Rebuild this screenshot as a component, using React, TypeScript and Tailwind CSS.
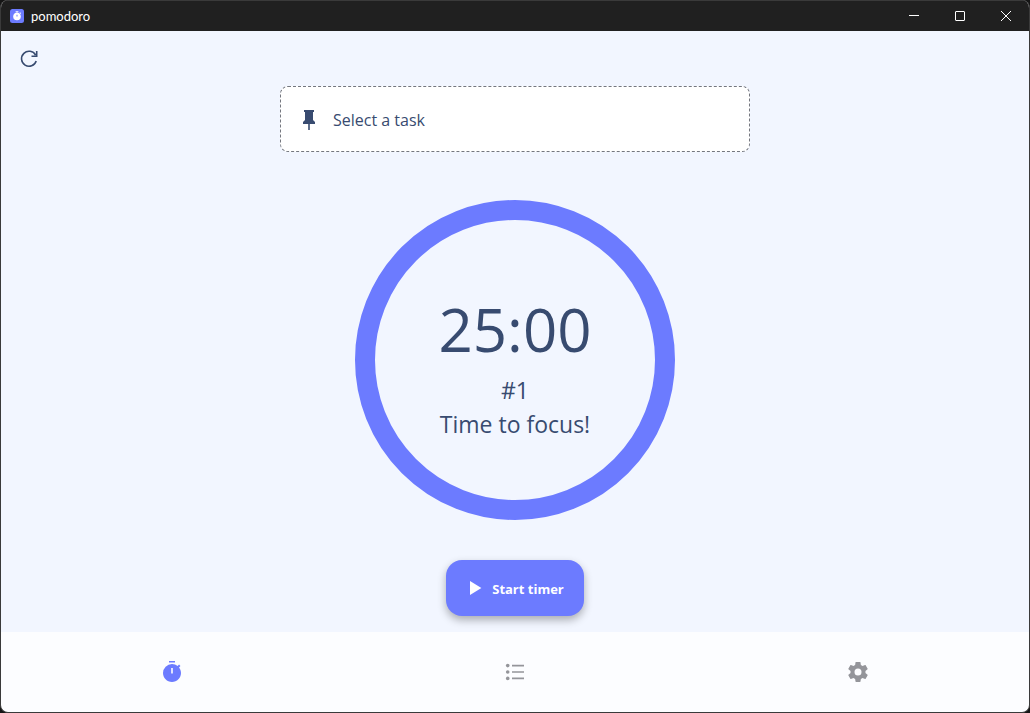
import type { ReactNode } from "react";

const COG =
  "M12,15.5A3.5,3.5 0 0,1 8.5,12A3.5,3.5 0 0,1 12,8.5A3.5,3.5 0 0,1 15.5,12A3.5,3.5 0 0,1 12,15.5M19.43,12.97C19.47,12.65 19.5,12.33 19.5,12C19.5,11.67 19.47,11.34 19.43,11L21.54,9.37C21.73,9.22 21.78,8.95 21.66,8.73L19.66,5.27C19.54,5.05 19.27,4.96 19.05,5.05L16.56,6.05C16.04,5.66 15.5,5.32 14.87,5.07L14.5,2.42C14.46,2.18 14.25,2 14,2H10C9.75,2 9.54,2.18 9.5,2.42L9.13,5.07C8.5,5.32 7.96,5.66 7.44,6.05L4.95,5.05C4.73,4.96 4.46,5.05 4.34,5.27L2.34,8.73C2.21,8.95 2.27,9.22 2.46,9.37L4.57,11C4.53,11.34 4.5,11.67 4.5,12C4.5,12.33 4.53,12.65 4.57,12.97L2.46,14.63C2.27,14.78 2.21,15.05 2.34,15.27L4.34,18.73C4.46,18.95 4.73,19.03 4.95,18.95L7.44,17.94C7.96,18.34 8.5,18.68 9.13,18.93L9.5,21.58C9.54,21.82 9.75,22 10,22H14C14.25,22 14.46,21.82 14.5,21.58L14.87,18.93C15.5,18.67 16.04,18.34 16.56,17.94L19.05,18.95C19.27,19.03 19.54,18.95 19.66,18.73L21.66,15.27C21.78,15.05 21.73,14.78 21.54,14.63L19.43,12.97Z";
const TIMER =
  "M19.03 7.39L20.45 5.97C20 5.46 19.55 5 19.04 4.56L17.62 6C16.07 4.74 14.12 4 12 4A9 9 0 0 0 3 13C3 17.97 7 22 12 22S21 17.97 21 13C21 10.88 20.26 8.93 19.03 7.39M12.8 13.6H11.2V8H12.8V13.6M15 1H9V2.4H15V1Z";
const PIN = "M16,12V4H17V2H7V4H8V12L6,14V16H11.2V22H12.8V16H18V14L16,12Z";

function Icon({ children }: { children: ReactNode }) {
  return (
    <svg viewBox="0 0 24 24" className="size-6 shrink-0" fill="currentColor" aria-hidden="true">
      {children}
    </svg>
  );
}

function TitleBar() {
  return (
    <header className="flex h-[31px] shrink-0 items-center justify-between border-t border-[#3a3a3a] bg-[#202020] text-white">
      <div className="flex items-center gap-[7px] pl-[9px]">
        <svg viewBox="0 0 14 14" className="size-[14px]" aria-hidden="true">
          <rect width="14" height="14" rx="2.5" fill="#6c7bff" />
          <circle cx="7" cy="7.5" r="3.8" fill="#fff" />
          <path d="M5.6 2.2h2.8v1.4H5.6zM9.4 3.8l.7-.6 1 1-.7.7z" fill="#fff" />
          <path d="M6.5 5.8h1v1.8h-1z" fill="#6c7bff" />
        </svg>
        <h1 className="font-['Lato','Open_Sans',sans-serif] text-[13px] leading-4">pomodoro</h1>
      </div>
      <div className="flex h-full">
        <button aria-label="Minimize" className="grid w-[46px] place-items-center">
          <svg viewBox="0 0 10 10" className="size-[10px]" stroke="currentColor" aria-hidden="true">
            <path d="M0 4.5h10" />
          </svg>
        </button>
        <button aria-label="Maximize" className="grid w-[46px] place-items-center">
          <svg viewBox="0 0 10 10" className="size-[10px]" fill="none" stroke="currentColor" aria-hidden="true">
            <rect x=".5" y=".5" width="9" height="9" rx=".5" />
          </svg>
        </button>
        <button aria-label="Close" className="grid w-[46px] place-items-center">
          <svg viewBox="0 0 10 10" className="size-[10px]" stroke="currentColor" aria-hidden="true">
            <path d="M0 0l10 10M10 0L0 10" />
          </svg>
        </button>
      </div>
    </header>
  );
}

function NavItem({ label, active, children }: { label: string; active?: boolean; children: ReactNode }) {
  return (
    <button
      aria-label={label}
      className={`grid flex-1 place-items-center ${active ? "text-[#6c7bff]" : "text-[#94959a]"}`}
    >
      <Icon>{children}</Icon>
    </button>
  );
}

export default function App() {
  return (
    <div className="min-h-screen bg-[#151515] font-['Open_Sans','Noto_Sans',sans-serif]">
      <div className="flex min-h-screen flex-col overflow-hidden rounded-lg border-x border-b border-[#3a3a3a] bg-[#fcfdff] text-[#384b70]">
        <TitleBar />
        <main className="flex flex-1 flex-col bg-[#f2f6ff] pb-3">
          <div className="flex h-[55px] items-center px-4">
            <button aria-label="Reset">
              <Icon>
                <path
                  d="M18.6 8.1A7.5 7.5 0 1 0 19.2 14M19.7 4v5.2h-5.2"
                  fill="none"
                  stroke="currentColor"
                  strokeWidth="1.6"
                />
              </Icon>
            </button>
          </div>
          <div className="flex flex-1 flex-col items-center px-4">
            <button className="flex h-[66px] w-full max-w-[470px] items-center gap-3 rounded-lg border border-dashed border-[#74777f] bg-white px-4 pt-px">
              <Icon>
                <path d={PIN} />
              </Icon>
              <span className="text-base">Select a task</span>
            </button>
            <section className="mt-12 flex size-80 flex-col items-center justify-center rounded-full border-20 border-[#6c7bff] pt-1.5">
              <p className="text-[60px] leading-[88px]">25:00</p>
              <p className="text-[23px] leading-[34px]">#1</p>
              <p className="text-[23px] leading-[34px]">Time to focus!</p>
            </section>
            <button className="mt-10 flex h-14 items-center gap-1.5 rounded-2xl bg-[#6c7bff] px-5 text-white shadow-[0_4px_8px_rgba(0,0,0,0.3)]">
              <svg viewBox="0 0 20 20" className="size-5" fill="currentColor" aria-hidden="true">
                <path d="M4 3l11.4 7L4 17z" />
              </svg>
              <span className="pt-px text-[13px] leading-5 font-bold">Start timer</span>
            </button>
          </div>
        </main>
        <nav className="flex h-20 shrink-0">
          <NavItem label="Timer" active>
            <path d={TIMER} />
          </NavItem>
          <NavItem label="Tasks">
            <path d="M9 4.8h12v1.6H9zM9 11.2h12v1.6H9zM9 17.6h12v1.6H9z" />
            <circle cx="4.7" cy="5.6" r="1.8" />
            <circle cx="4.7" cy="12" r="1.8" />
            <circle cx="4.7" cy="18.4" r="1.8" />
          </NavItem>
          <NavItem label="Settings">
            <path d={COG} />
          </NavItem>
        </nav>
      </div>
    </div>
  );
}
